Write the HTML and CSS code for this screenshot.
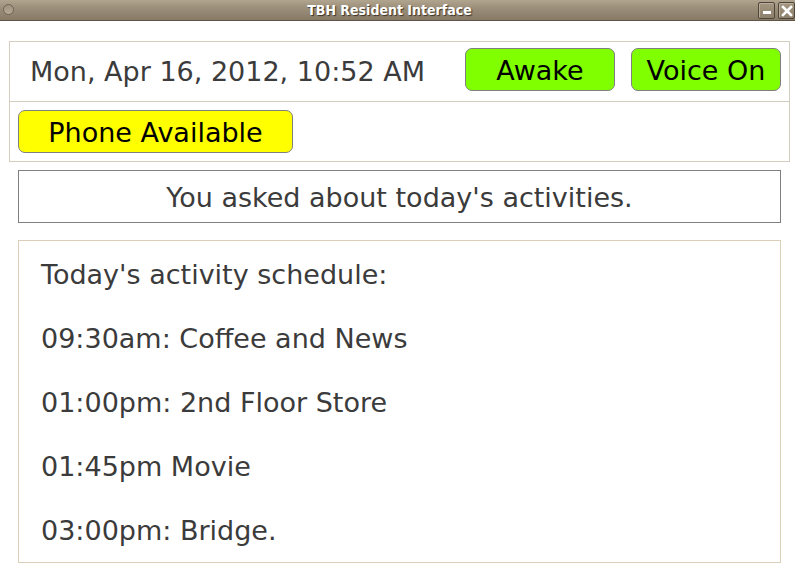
FILE: index.html
```html
<!DOCTYPE html>
<html>
<head>
<meta charset="utf-8">
<title>TBH Resident Interface</title>
<link rel="stylesheet" href="styles.css">
</head>
<body>
<div class="titlebar">
  <span class="tb-dot"></span>
  <span class="tb-title">TBH Resident Interface</span>
  <div class="tb-buttons">
    <span class="tb-btn tb-min"><span class="min-bar"></span></span>
    <span class="tb-btn tb-close">
      <svg width="12" height="12" viewBox="0 0 12 12"><path d="M2 2 L10 10 M10 2 L2 10" stroke="#fff" stroke-width="2.6" stroke-linecap="square"/></svg>
    </span>
  </div>
</div>
<div class="content">
  <div class="status-panel">
    <div class="status-row top">
      <div class="date">Mon, Apr 16, 2012, 10:52 AM</div>
      <button class="btn green">Awake</button>
      <button class="btn green">Voice On</button>
    </div>
    <div class="status-row bottom">
      <button class="btn yellow phone">Phone Available</button>
    </div>
  </div>
  <div class="message">You asked about today's activities.</div>
  <div class="schedule">
    <p>Today's activity schedule:</p>
    <p>09:30am: Coffee and News</p>
    <p>01:00pm: 2nd Floor Store</p>
    <p>01:45pm Movie</p>
    <p>03:00pm: Bridge.</p>
  </div>
</div>
</body>
</html>
```
FILE: styles.css
```css
html, body {
  margin: 0;
  padding: 0;
  background: #ffffff;
  font-family: "DejaVu Sans", Verdana, sans-serif;
}

.titlebar {
  position: relative;
  height: 20px;
  border-bottom: 1px solid #5f5446;
  background: linear-gradient(#b1a590 0%, #9c8f7a 40%, #867a66 100%);
  display: flex;
  align-items: center;
  justify-content: center;
}

.tb-dot {
  position: absolute;
  left: 3px;
  top: 4px;
  width: 9px;
  height: 9px;
  border-radius: 50%;
  border: 1px solid #6f6454;
  background: linear-gradient(#9d917d, #b7ab97);
}

.tb-title {
  font-family: "DejaVu Sans Condensed", "DejaVu Sans", sans-serif;
  font-stretch: condensed;
  font-weight: bold;
  font-size: 14px;
  color: #ffffff;
  text-shadow: 1px 1px 1px #3b3226;
  margin-left: -16px;
}

.tb-buttons {
  position: absolute;
  right: 0;
  top: 2px;
  display: flex;
  gap: 3px;
}

.tb-btn {
  width: 15px;
  height: 15px;
  border: 1px solid #4f4538;
  box-shadow: inset 1px 1px 0 #b8ad9a;
  background: linear-gradient(#a39781, #8c7f6b);
  display: flex;
  align-items: center;
  justify-content: center;
  border-radius: 2px;
}

.tb-min {
  align-items: flex-end;
}

.min-bar {
  width: 8px;
  height: 3px;
  background: #ffffff;
  margin-bottom: 4px;
}

.content {
  padding: 20px 0 0 9px;
}

.status-panel {
  width: 781px;
  box-sizing: border-box;
  border: 1px solid #d6cdc1;
}

.status-row {
  display: flex;
  box-sizing: border-box;
}

.status-row.top {
  height: 60px;
  padding: 6px 8px 0 20px;
  border-bottom: 1px solid #d6cdc1;
  gap: 16px;
  align-items: flex-start;
}

.status-row.bottom {
  height: 59px;
  padding: 8px 8px 0 8px;
}

.date {
  flex: 1;
  font-size: 27px;
  color: #3b3b3b;
  line-height: 43px;
  padding-top: 2px;
}

.btn {
  height: 43px;
  box-sizing: border-box;
  border: 1px solid #7f7f7f;
  border-radius: 7px;
  font-family: "DejaVu Sans", Verdana, sans-serif;
  font-size: 27px;
  color: #000000;
  padding: 1px 0 0 0;
  line-height: 41px;
  text-align: center;
}

.btn.green {
  width: 150px;
  background: #80ff00;
}

.btn.yellow {
  background: #ffff00;
}

.btn.phone {
  width: 275px;
}

.message {
  margin-top: 8px;
  margin-left: 9px;
  width: 763px;
  height: 53px;
  box-sizing: border-box;
  border: 1px solid #7f7f7f;
  text-align: center;
  font-size: 27px;
  padding-top: 3px;
  line-height: 48px;
  color: #3b3b3b;
}

.schedule {
  margin-top: 17px;
  margin-left: 9px;
  width: 763px;
  height: 323px;
  box-sizing: border-box;
  border: 1px solid #dccfba;
  padding: 18px 22px 0 22px;
  color: #3b3b3b;
  font-size: 27px;
}

.schedule p {
  margin: 0 0 32px 0;
  line-height: 32px;
}
```
